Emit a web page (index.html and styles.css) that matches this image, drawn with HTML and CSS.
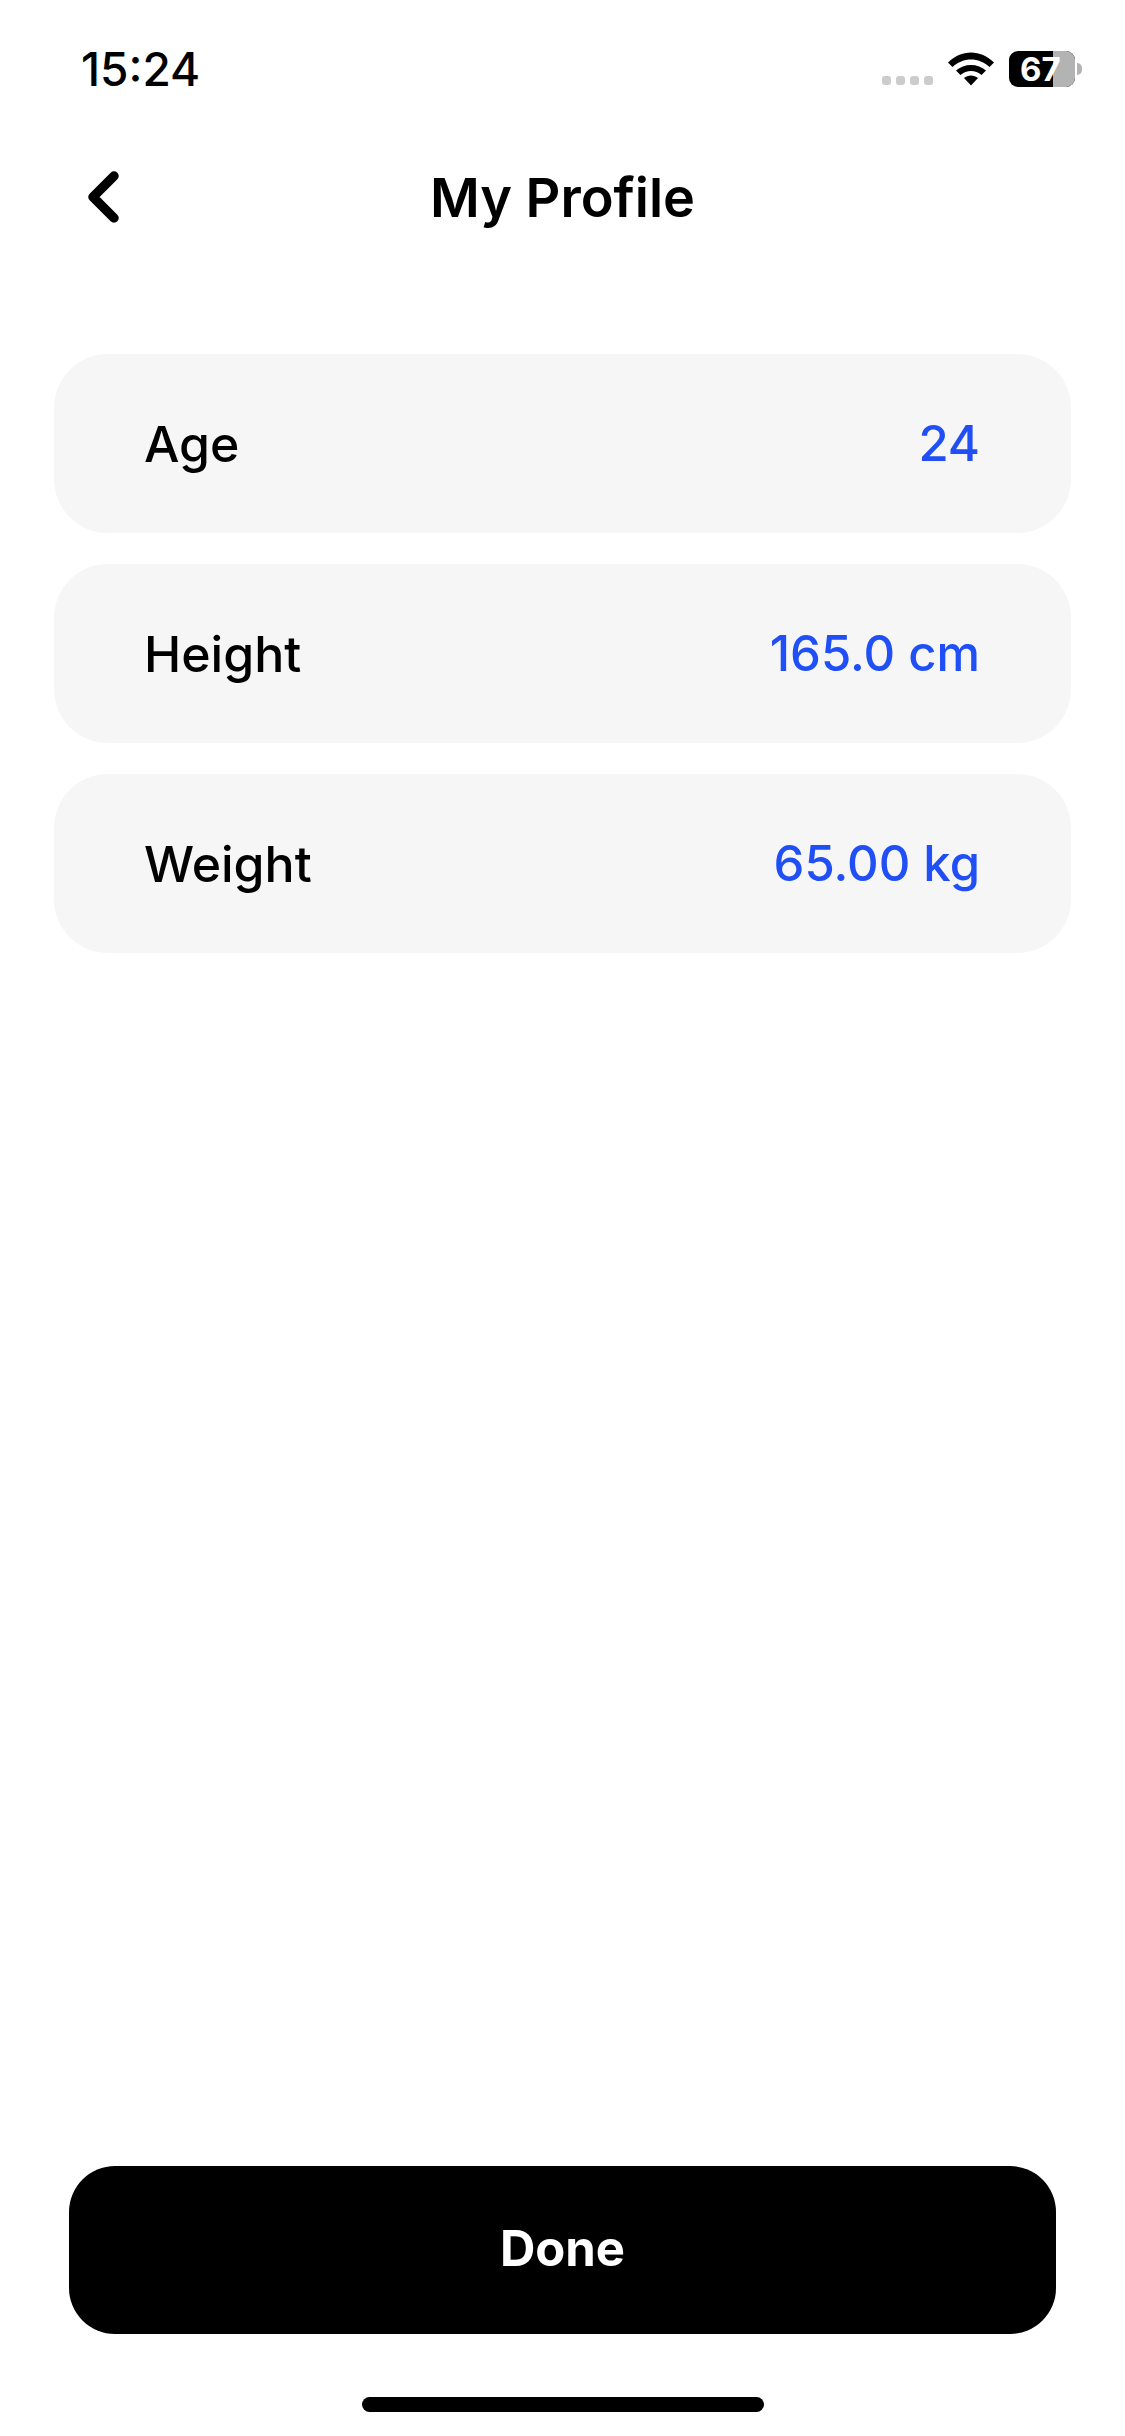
FILE: index.html
```html
<!DOCTYPE html>
<html lang="en">
<head>
  <meta charset="UTF-8" />
  <meta name="viewport" content="width=device-width, initial-scale=1.0"/>
  <title>My Profile</title>
  <link rel="stylesheet" href="styles.css">
</head>
<body>
  <div class="screen">
    <div class="status-bar">
      <span class="time">15:24</span>
      <div class="status-icons">
        <div class="signal">
          <span></span><span></span><span></span><span></span>
        </div>
        <svg class="wifi" width="46" height="34" viewBox="0 0 46 34">
          <path d="M0 10.5 C13 -3 33 -3 46 10.5 L41.5 15 C31 5 15 5 4.5 15 Z" fill="#000"/>
          <path d="M8 18.5 C16 11 30 11 38 18.5 L33.5 23 C27.5 17.5 18.5 17.5 12.5 23 Z" fill="#000"/>
          <path d="M16 26 C20 22.5 26 22.5 30 26 L23 33.5 Z" fill="#000"/>
        </svg>
        <div class="battery">
          <div class="battery-body">
            <div class="battery-fill"></div>
            <span class="battery-text">67</span>
          </div>
          <div class="battery-nub"></div>
        </div>
      </div>
    </div>

    <div class="header">
      <svg class="back" width="40" height="56" viewBox="0 0 40 56">
        <path d="M31 7 L10 28 L31 49" fill="none" stroke="#000" stroke-width="9.5" stroke-linecap="round" stroke-linejoin="round"/>
      </svg>
      <h2>My Profile</h2>
    </div>

    <div class="rows">
      <div class="row">
        <span class="label">Age</span>
        <span class="value">24</span>
      </div>
      <div class="row">
        <span class="label">Height</span>
        <span class="value">165.0 cm</span>
      </div>
      <div class="row">
        <span class="label">Weight</span>
        <span class="value">65.00 kg</span>
      </div>
    </div>

    <button class="btn-done">Done</button>
    <div class="home-bar"></div>
  </div>
</body>
</html>
```

FILE: styles.css
```css
body {
  font-family: Inter, 'Noto Sans', sans-serif;
  background-color: #fff;
  color: #000;
  margin: 0;
  padding: 0;
}

.screen {
  width: 1125px;
  height: 2436px;
  display: flex;
  flex-direction: column;
  overflow: hidden;
}

.status-bar {
  height: 138px;
  padding: 45px 43px 0 81px;
  box-sizing: border-box;
  display: flex;
  justify-content: space-between;
  align-items: flex-start;
}

.time {
  font-size: 46px;
  line-height: 48px;
  font-weight: 500;
}

.status-icons {
  display: flex;
  align-items: center;
  gap: 15px;
  margin-top: 6px;
}

.signal {
  display: flex;
  gap: 5px;
  margin-top: 22px;
}

.signal span {
  width: 9px;
  height: 9px;
  border-radius: 3px;
  background-color: #ccc;
}

.battery {
  display: flex;
  align-items: center;
  gap: 2px;
}

.battery-body {
  position: relative;
  width: 66px;
  height: 36px;
  border-radius: 9px;
  background-color: #000;
}

.battery-fill {
  position: absolute;
  top: 0;
  right: 0;
  width: 22px;
  height: 100%;
  border-radius: 0 9px 9px 0;
  background-color: #b3b3b3;
}

.battery-text {
  position: absolute;
  left: 11px;
  top: 0;
  font-size: 33px;
  line-height: 36px;
  font-weight: 700;
  color: #fff;
}

.battery-nub {
  width: 5px;
  height: 12px;
  border-radius: 0 6px 6px 0;
  background-color: #b3b3b3;
}

.header {
  height: 118px;
  position: relative;
  display: flex;
  justify-content: center;
  align-items: center;
}

.back {
  position: absolute;
  left: 83px;
  top: 31px;
}

.header h2 {
  margin: 0;
  font-size: 54px;
  font-weight: 600;
}

.rows {
  margin-top: 98px;
  padding: 0 54px;
  display: flex;
  flex-direction: column;
  gap: 31px;
}

.row {
  height: 179px;
  padding: 0 91px 0 90px;
  display: flex;
  justify-content: space-between;
  align-items: center;
  background-color: #f6f6f6;
  border-radius: 54px;
}

.label {
  font-size: 50px;
  font-weight: 500;
}

.value {
  font-size: 49px;
  font-weight: 500;
  color: #1f4ff5;
}

.btn-done {
  margin: auto 69px 0;
  height: 168px;
  padding: 0 0 3px;
  flex-shrink: 0;
  background-color: #000;
  color: #fff;
  border: none;
  border-radius: 46px;
  font-family: inherit;
  font-size: 49px;
  font-weight: 700;
}

.home-bar {
  width: 402px;
  height: 15px;
  margin: 63px auto 24px;
  flex-shrink: 0;
  border-radius: 8px;
  background-color: #000;
}
```
